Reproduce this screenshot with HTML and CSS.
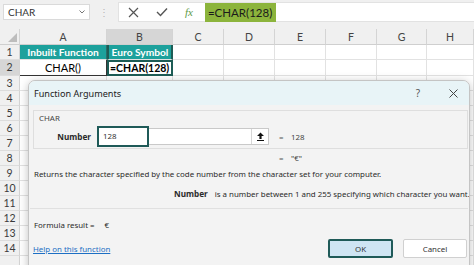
FILE: index.html
```html
<!DOCTYPE html>
<html>
<head>
	<title>CHAR - Function Arguments</title>
	<meta charset="utf-8">
	<link rel="stylesheet" href="styles.css">
</head>
<body>
	<header class="fbar">
		<div class="namebox">
			<span>CHAR</span>
			<svg class="dd" width="6" height="4" viewBox="0 0 6 4"><path d="M0.5 0.5 L3 3 L5.5 0.5" fill="none" stroke="#777" stroke-width="1"/></svg>
		</div>
		<div class="grip">⋮</div>
		<div class="fbox">
			<svg class="ico" width="11" height="11" viewBox="0 0 11 11"><path d="M1 1 L10 10 M10 1 L1 10" stroke="#555" stroke-width="1.2"/></svg>
			<svg class="ico" width="12" height="10" viewBox="0 0 12 10"><path d="M1 5 L4.5 8.5 L11 1.5" fill="none" stroke="#555" stroke-width="1.4"/></svg>
			<span class="fx">fx</span>
			<span class="formula">=CHAR(128)</span>
		</div>
	</header>

	<main class="sheet">
		<div class="row head">
			<span class="corner"><svg width="9" height="9" viewBox="0 0 9 9"><path d="M9 0 L9 9 L0 9 Z" fill="#bdbdbd"/></svg></span>
			<span>A</span><span class="hsel">B</span><span>C</span><span>D</span><span>E</span><span>F</span><span>G</span><span>H</span>
		</div>
		<div class="row r1">
			<span class="num">1</span>
			<span class="th">Inbuilt Function</span>
			<span class="th colb">Euro Symbol</span>
			<span></span><span></span><span></span><span></span><span></span><span></span>
		</div>
		<div class="row r2">
			<span class="num nsel">2</span>
			<span class="td">CHAR()</span>
			<span class="td active">=CHAR(128)</span>
			<span></span><span></span><span></span><span></span><span></span><span></span>
		</div>
		<div class="row"><span class="num">3</span><span></span><span></span><span></span><span></span><span></span><span></span><span></span><span></span></div>
		<div class="row"><span class="num">4</span><span></span><span></span><span></span><span></span><span></span><span></span><span></span><span></span></div>
		<div class="row"><span class="num">5</span><span></span><span></span><span></span><span></span><span></span><span></span><span></span><span></span></div>
		<div class="row"><span class="num">6</span><span></span><span></span><span></span><span></span><span></span><span></span><span></span><span></span></div>
		<div class="row"><span class="num">7</span><span></span><span></span><span></span><span></span><span></span><span></span><span></span><span></span></div>
		<div class="row"><span class="num">8</span><span></span><span></span><span></span><span></span><span></span><span></span><span></span><span></span></div>
		<div class="row"><span class="num">9</span><span></span><span></span><span></span><span></span><span></span><span></span><span></span><span></span></div>
		<div class="row"><span class="num">10</span><span></span><span></span><span></span><span></span><span></span><span></span><span></span><span></span></div>
		<div class="row"><span class="num">11</span><span></span><span></span><span></span><span></span><span></span><span></span><span></span><span></span></div>
		<div class="row"><span class="num">12</span><span></span><span></span><span></span><span></span><span></span><span></span><span></span><span></span></div>
		<div class="row"><span class="num">13</span><span></span><span></span><span></span><span></span><span></span><span></span><span></span><span></span></div>
		<div class="row"><span class="num">14</span><span></span><span></span><span></span><span></span><span></span><span></span><span></span><span></span></div>
		<div class="row last"><span class="num"></span><span></span><span></span><span></span><span></span><span></span><span></span><span></span><span></span></div>
	</main>

	<section class="dialog">
		<div class="dlg-title">
			<span>Function Arguments</span>
			<span class="help-q">?</span>
			<svg class="close" width="9" height="9" viewBox="0 0 9 9"><path d="M0.5 0.5 L8.5 8.5 M8.5 0.5 L0.5 8.5" stroke="#444" stroke-width="1"/></svg>
		</div>

		<div class="group">
			<div class="fname">CHAR</div>
			<div class="arg">
				<label>Number</label>
				<div class="arg-input">
					<div class="focus">128</div>
					<div class="pick">
						<svg width="9" height="9" viewBox="0 0 9 9"><path d="M4.5 0.5 L8 4 L5.6 4 L5.6 7 L3.4 7 L3.4 4 L1 4 Z" fill="#111"/><path d="M1 8.5 L8 8.5" stroke="#111" stroke-width="1"/></svg>
					</div>
				</div>
				<span class="eq">=</span>
				<span class="val">128</span>
			</div>
		</div>

		<div class="result-line"><span class="eq">=</span><span class="val">"€"</span></div>
		<p class="desc">Returns the character specified by the code number from the character set for your computer.</p>
		<p class="arg-desc"><b>Number</b>is a number between 1 and 255 specifying which character you want.</p>
		<hr>
		<p class="fres">Formula result =<span class="euro">€</span></p>

		<div class="footer">
			<a href="#" class="helplink">Help on this function</a>
			<div class="buttons">
				<button class="ok">OK</button>
				<button>Cancel</button>
			</div>
		</div>
	</section>
</body>
</html>
```

FILE: styles.css
```css
* {
	margin: 0;
	box-sizing: border-box;
}

body {
	margin: 0;
	width: 474px;
	height: 265px;
	overflow: hidden;
	background-color: #f0f0f0;
	font-family: Lato, "Liberation Sans", sans-serif;
	position: relative;
}

/* formula bar */
.fbar {
	height: 24px;
	display: flex;
	align-items: center;
	margin-bottom: 5px;
}

.namebox {
	margin-left: 3px;
	width: 87px;
	height: 16px;
	background-color: white;
	border: 1px solid #dadada;
	display: flex;
	align-items: center;
	justify-content: space-between;
	padding: 0 4px 0 4px;
	font-size: 10px;
	color: #333;
}

.grip {
	width: 28px;
	text-align: center;
	color: #b5b5b5;
	font-size: 10px;
}

.fbox {
	flex: 1;
	height: 20px;
	background-color: white;
	border: 1px solid #e2e2e2;
	border-right: none;
	display: flex;
	align-items: center;
	padding-left: 9px;
}

.fbox .ico {
	margin-right: 17px;
}

.fx {
	font-family: "Liberation Serif", serif;
	font-style: italic;
	font-size: 11px;
	color: #5d9a47;
	margin-right: 12px;
}

.formula {
	background-color: #8cb43c;
	height: 19px;
	line-height: 19px;
	padding: 0 3px 0 3px;
	width: 71px;
	font-size: 11.5px;
	color: #1b1b1b;
}

/* grid */
.row {
	display: grid;
	grid-template-columns: 20px 87px 66px 51px 51px 51px 51px 50px 47px;
	height: 15px;
	background-color: white;
}

.row > span {
	border-right: 1px solid #e2e2e2;
	border-bottom: 1px solid #e2e2e2;
	font-size: 11px;
	line-height: 15px;
	text-align: center;
	white-space: nowrap;
	overflow: hidden;
}

.row > .num {
	background-color: #f0f0f0;
	border-right: 1px solid #d4d4d4;
	border-bottom: 1px solid #dcdcdc;
	color: #3a3a3a;
	font-size: 10.5px;
}

.row.head {
	height: 16px;
	background-color: #f0f0f0;
}

.row.head > span {
	border-right: 1px solid #d4d4d4;
	border-bottom: 1px solid #cfcfcf;
	color: #444;
	font-size: 10.5px;
	line-height: 16px;
}

.row.head > .corner {
	display: flex;
	align-items: flex-end;
	justify-content: flex-end;
	padding: 0 2px 2px 0;
}

.row.head > .hsel {
	background-color: #d6d6d6;
}

.row.r2 {
	height: 16px;
}

.row.last {
	height: 10px;
}

.nsel {
	background-color: #d6d6d6 !important;
}

.th {
	background-color: #1da19c;
	color: white;
	font-weight: bold;
	font-size: 10.2px !important;
	border-right: 1px solid #2a6c69 !important;
}

.td {
	border-bottom: 1px solid #333 !important;
	border-right: 1px solid #333 !important;
}

.colb {
	border-left: 2px solid #1d5c55;
	border-right: 2px solid #1d5c55 !important;
}

.active {
	border: 2px solid #1d5c55 !important;
	font-weight: bold;
	font-size: 10.5px !important;
	text-align: left !important;
	padding-left: 1px;
	line-height: 12px !important;
}

/* dialog */
.dialog {
	position: absolute;
	left: 28px;
	top: 80px;
	width: 442px;
	height: 200px;
	background-color: #f3f3f3;
	border: 1px solid #c4c4c4;
	border-radius: 7px 7px 0 0;
	box-shadow: 0 2px 10px rgba(0, 0, 0, 0.25);
	font-family: "Noto Sans", sans-serif;
	font-size: 7.9px;
	color: #2a2a2a;
	overflow: hidden;
	white-space: nowrap;
}

.dlg-title {
	height: 24px;
	display: flex;
	align-items: center;
	padding-left: 5px;
	background-color: #e8f4f7;
	font-size: 9.1px;
	color: #222;
}

.help-q {
	margin-left: auto;
	color: #555;
	font-size: 10px;
}

.close {
	margin: 0 11px 0 29px;
}

.group {
	margin: 5px 1px 0 4px;
	border: 1px solid #dedede;
	padding: 1px 0 1px 0;
}

.fname {
	line-height: 12px;
	padding-left: 5px;
	color: #444;
}

.arg {
	margin-top: 2px;
	height: 21px;
	display: flex;
	align-items: center;
}

.arg label {
	width: 57px;
	text-align: right;
	font-weight: bold;
	font-size: 8.2px;
	margin-right: 6px;
}

.arg-input {
	width: 172px;
	height: 17px;
	background-color: white;
	border: 1px solid #c9c9c9;
	display: flex;
	align-items: center;
}

.focus {
	width: 52px;
	height: 21px;
	margin-left: -1px;
	border: 2px solid #1f5a58;
	background-color: white;
	padding-left: 4px;
	line-height: 17px;
	color: #333;
}

.pick {
	margin-left: auto;
	width: 17px;
	height: 15px;
	border-left: 1px solid #d6d6d6;
	display: flex;
	align-items: center;
	justify-content: center;
}

.eq {
	margin-left: 10px;
	width: 12px;
	color: #555;
}

.val {
	color: #444;
}

.result-line {
	margin-top: 3px;
	line-height: 12px;
	padding-left: 240px;
	display: flex;
}

.desc {
	margin-top: 4px;
	line-height: 12px;
	padding-left: 5px;
}

.arg-desc {
	margin-top: 8px;
	line-height: 12px;
	padding-left: 145px;
}

.arg-desc b {
	font-size: 8.2px;
	margin-right: 7px;
}

hr {
	margin: 8px 1px 0 1px;
	border: none;
	border-top: 1px solid #e0e0e0;
}

.fres {
	margin-top: 10px;
	line-height: 12px;
	padding-left: 5px;
}

.euro {
	margin-left: 10px;
}

.footer {
	margin-top: 8px;
	display: flex;
	align-items: center;
	padding: 0 2px 0 4px;
}

.helplink {
	color: #1d6fc4;
	font-size: 7.9px;
}

.buttons {
	margin-left: auto;
	display: flex;
	gap: 10px;
}

button {
	width: 64px;
	height: 19px;
	background-color: white;
	border: 1px solid #d0d0d0;
	border-radius: 2px;
	font-family: "Noto Sans", sans-serif;
	font-size: 7.9px;
	color: #333;
}

button.ok {
	width: 65px;
	background-color: #cfe5f3;
	border: 2px solid #1f5a58;
}
```
